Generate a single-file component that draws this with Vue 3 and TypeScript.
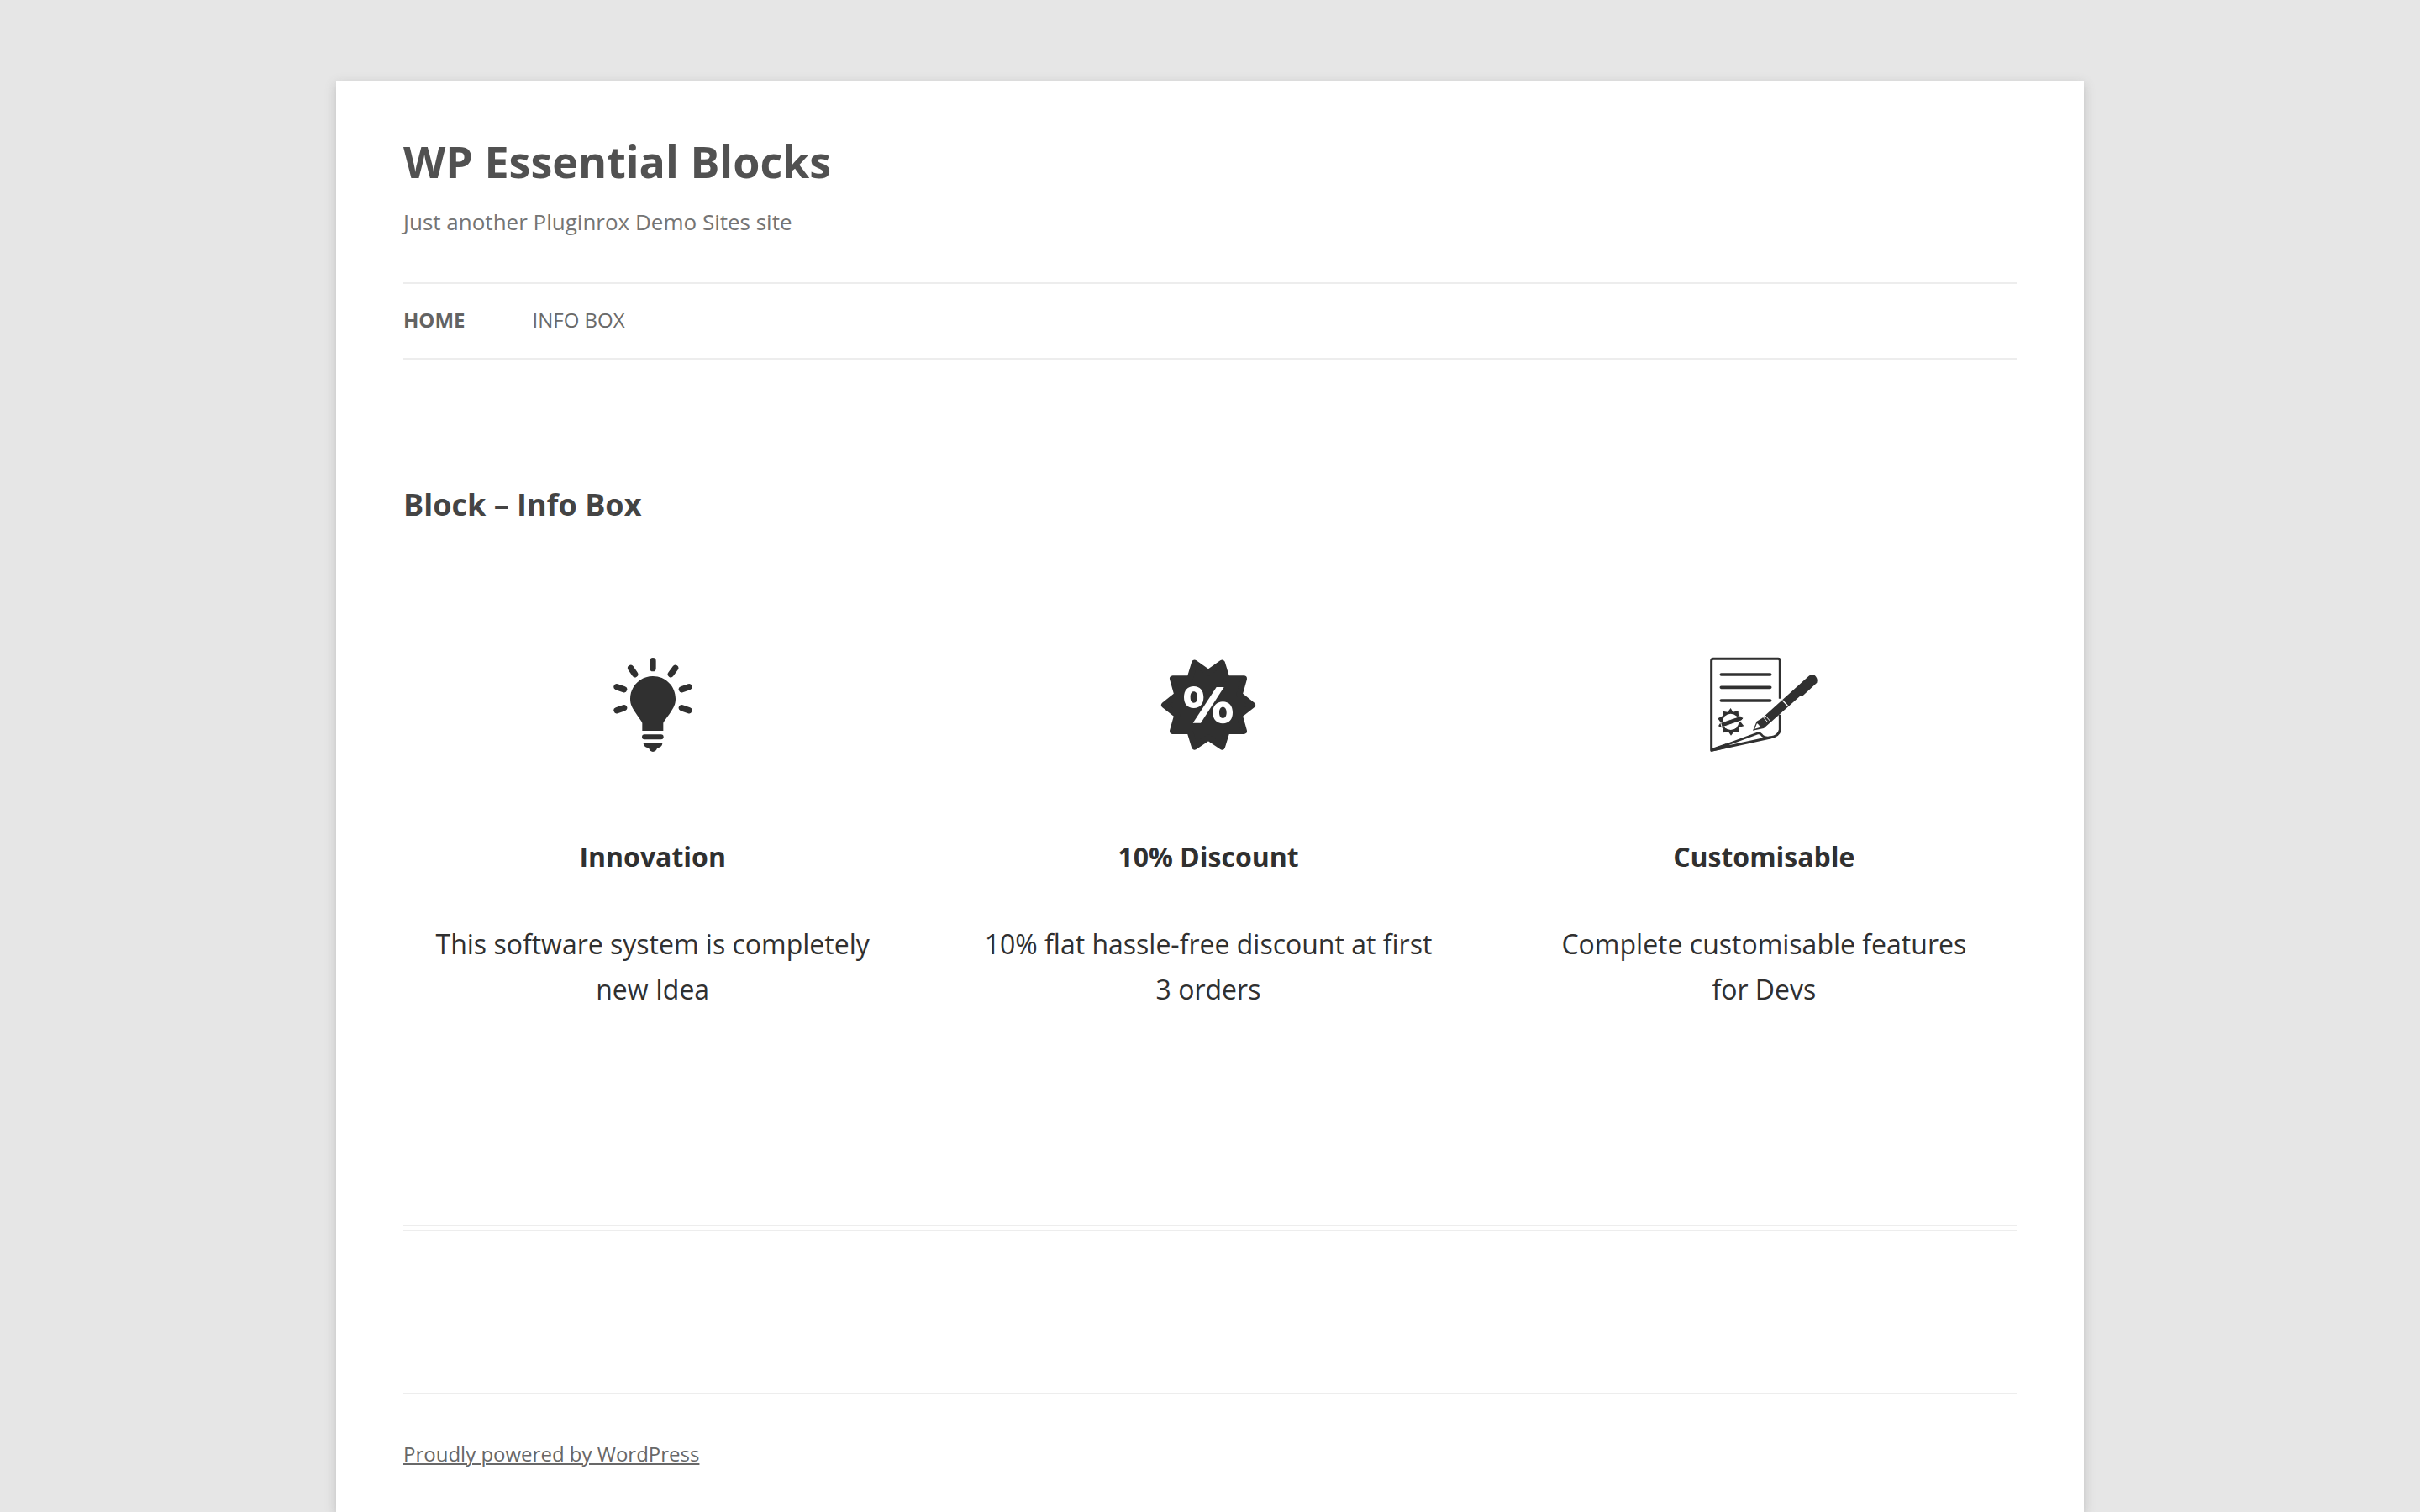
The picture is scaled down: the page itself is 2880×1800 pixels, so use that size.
<script setup lang="ts">
interface InfoBox {
  icon: 'bulb' | 'discount' | 'contract'
  title: string
  text: string
}

interface NavItem {
  label: string
  current: boolean
}

const navItems: NavItem[] = [
  { label: 'Home', current: true },
  { label: 'Info Box', current: false },
]

const boxes: InfoBox[] = [
  { icon: 'bulb', title: 'Innovation', text: 'This software system is completely new Idea' },
  { icon: 'discount', title: '10% Discount', text: '10% flat hassle-free discount at first 3 orders' },
  { icon: 'contract', title: 'Customisable', text: 'Complete customisable features for\u00a0Devs' },
]
</script>

<template>
  <div class="page">
    <header class="site-header">
      <h1 class="site-title"><a href="#">WP Essential Blocks</a></h1>
      <p class="site-description">Just another Pluginrox Demo Sites site</p>
      <nav class="main-nav" aria-label="Main">
        <ul>
          <li v-for="item in navItems" :key="item.label">
            <a href="#" :class="{ current: item.current }">{{ item.label }}</a>
          </li>
        </ul>
      </nav>
    </header>

    <main class="content">
      <h2 class="entry-title">Block – Info Box</h2>
      <div class="boxes">
        <section v-for="box in boxes" :key="box.title" class="box">
          <svg v-if="box.icon === 'bulb'" class="icon" viewBox="-10 66 480 342" aria-hidden="true">
            <g stroke="#303030" stroke-width="22" stroke-linecap="round">
              <path d="M230 80V107M151 106L166 128M310 106L294 128M101 173L127 182M359 173L333 182M101 257L127 248M359 257L333 248" />
            </g>
            <path d="M192 330V302C188 293 177 280 167 264C156 247 149 236 149 216C149 171 185 135 230 135C276 135 311 171 311 216C311 236 304 247 293 264C283 280 271 293 267 302V330Z" />
            <rect x="191" y="343" width="77" height="18" rx="9" />
            <path d="M196 373H264C264 384 257 390 246 391C243 400 237 405 230 405C223 405 218 400 215 391C204 390 196 384 196 373Z" />
          </svg>
          <svg v-else-if="box.icon === 'discount'" class="icon" viewBox="-6 66 480 342" aria-hidden="true">
            <path stroke="#303030" stroke-width="22" stroke-linejoin="round" d="M185 88L234 122L283 88L300 144L361 144L345 201L391 238L345 274L361 331L300 331L283 387L234 354L185 387L168 331L107 331L123 274L77 238L123 201L107 144L168 144Z" />
            <g fill="#fff" fill-rule="evenodd">
              <path d="M182 171C204 171 217 186 217 210C217 234 204 249 182 249C160 249 147 234 147 210C147 186 160 171 182 171ZM182 190C174 190 170 197 170 210C170 223 174 230 182 230C190 230 195 223 195 210C195 197 190 190 182 190Z" />
              <path d="M286 226C308 226 321 241 321 265C321 289 308 304 286 304C264 304 250 289 250 265C250 241 264 226 286 226ZM286 245C278 245 273 252 273 265C273 278 278 285 286 285C294 285 299 278 299 265C299 252 294 245 286 245Z" />
              <path d="M263 174H290L207 302H179Z" />
            </g>
          </svg>
          <svg v-else class="icon" viewBox="28 66 480 342" aria-hidden="true">
            <g fill="none" stroke="#303030" stroke-linejoin="round">
              <path stroke-width="9" d="M326 215V80Q326 73 319 73H88Q81 73 81 80V400L292 354Q323 348 326 326V272" />
              <path stroke-width="8" d="M83 399L246 339Q254 337 259 343Q270 358 294 353" />
              <path stroke-width="11" stroke-linecap="round" d="M116 129H291M116 175H291M116 222H291" />
            </g>
            <path d="M80 404V394L132 376L146 380L140 391Z" />
            <path d="M150 249L158 263L177 258L178 273L194 284L184 296L197 313L181 317L178 335L162 333L151 347L142 334L123 337L122 321L106 313L114 300L104 286L121 277L122 260L139 263Z" />
            <circle cx="150" cy="298" r="29" fill="#fff" />
            <path stroke="#fff" stroke-width="3" d="M114 301L182 278L197 284L188 294L119 318Z" />
            <path d="M276 272L429 134Q440 124 451 133Q463 145 458 158L406 206L400 204L298 295L268 321L229 329L243 296L262 285Z" />
            <path stroke="#fff" stroke-width="4" d="M335 221L353 240" />
            <path stroke="#fff" stroke-width="3" d="M272 274L290 294M265 280L283 300" />
            <path fill="#fff" d="M236 323L244 303L250 308L256 317Z" />
          </svg>
          <h3>{{ box.title }}</h3>
          <p>{{ box.text }}</p>
        </section>
      </div>
      <div class="entry-end"></div>
    </main>

    <footer class="site-footer">
      <a href="#">Proudly powered by WordPress</a>
    </footer>
  </div>
</template>

<style>
body {
  background: #e6e6e6;
}
</style>

<style scoped>
.page {
  box-sizing: border-box;
  max-width: 2080px;
  min-height: calc(100vh - 96px);
  margin: 96px auto 0;
  padding: 0 80px 40px;
  background: #fff;
  box-shadow: 0 4px 12px rgba(100, 100, 100, 0.3);
  font-family: "Open Sans", "Noto Sans", sans-serif;
  color: #303030;
}

h1,
h2,
h3,
p,
ul {
  margin: 0;
  padding: 0;
}

.site-header {
  padding-top: 48px;
}

.site-title {
  font-size: 52px;
  line-height: 96px;
  font-weight: 700;
}

.site-title a {
  color: #515151;
  text-decoration: none;
}

.site-description {
  font-size: 26px;
  line-height: 48px;
  color: #757575;
}

.main-nav {
  margin-top: 48px;
  border-top: 2px solid #ededed;
  border-bottom: 2px solid #ededed;
}

.main-nav ul {
  display: flex;
  gap: 80px;
  padding-bottom: 2px;
  list-style: none;
}

.main-nav a {
  display: block;
  font-size: 24px;
  line-height: 86px;
  color: #6a6a6a;
  text-transform: uppercase;
  text-decoration: none;
}

.main-nav a.current {
  color: #636363;
  font-weight: 700;
}

.entry-title {
  margin-top: 144px;
  font-size: 36px;
  line-height: 58px;
  font-weight: 700;
  color: #444;
}

.boxes {
  display: grid;
  grid-template-columns: repeat(3, 1fr);
  gap: 68px;
  margin-top: 152px;
  padding-right: 4px;
}

.box {
  padding: 0 30px;
  text-align: center;
}

.icon {
  display: block;
  width: 160px;
  height: 114px;
  margin: 0 auto;
  fill: #303030;
}

.box h3 {
  margin-top: 97px;
  font-size: 32px;
  line-height: 54px;
}

.box p {
  margin-top: 50px;
  font-size: 32px;
  line-height: 54px;
}

.entry-end {
  height: 4px;
  margin-top: 253px;
  border-top: 2px solid #ededed;
  border-bottom: 2px solid #ededed;
}

.site-footer {
  margin-top: 192px;
  padding-top: 48px;
  border-top: 2px solid #ededed;
  font-size: 24px;
  line-height: 46px;
}

.site-footer a {
  color: #686868;
  text-underline-offset: 2px;
  text-decoration-thickness: 2px;
}
</style>
